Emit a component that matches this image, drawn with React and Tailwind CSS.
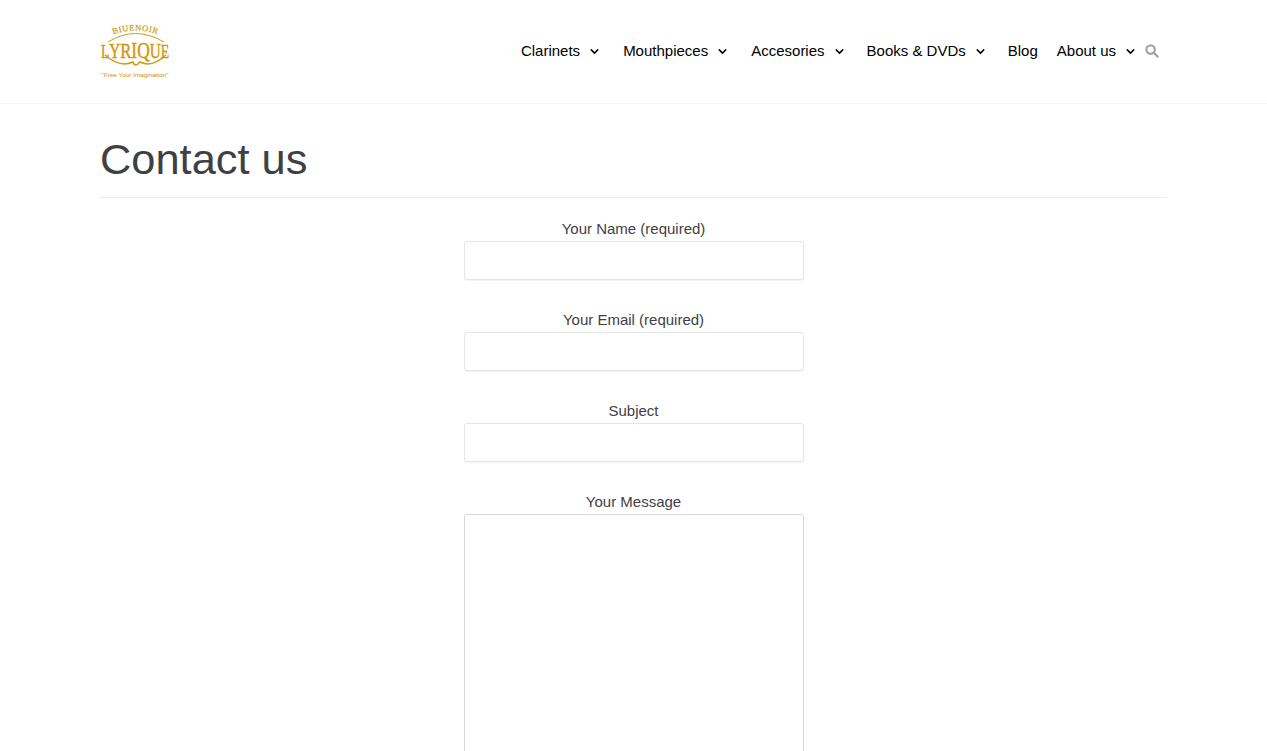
import { ChevronDown } from "lucide-react";

const menu = [
  { label: "Clarinets", gap: "mr-[22px]" },
  { label: "Mouthpieces", gap: "mr-[22px]" },
  { label: "Accesories", gap: "mr-[21px]" },
  { label: "Books & DVDs", gap: "mr-[21px]" },
  { label: "Blog", plain: true },
  { label: "About us" },
];

function Logo() {
  return (
    <svg width="70" height="56" viewBox="0 0 70 56" className="block overflow-visible">
      <path id="logo-arc" d="M9 12 Q35 1 62 12" fill="none" />
      <text fontFamily="Liberation Serif, serif" fontSize="8.5" fill="#d1990f" stroke="#d1990f" strokeWidth="0.2" letterSpacing="0.6">
        <textPath href="#logo-arc" startOffset="50%" textAnchor="middle">BIUENOIR</textPath>
      </text>
      <path d="M8 18 Q35 1 64 18" fill="none" stroke="#d1990f" strokeWidth="1" />
      <g transform="translate(35 33.5) scale(0.76 1)">
        <text textAnchor="middle" fontFamily="Liberation Serif, serif" fill="#d1990f" stroke="#d1990f" strokeWidth="0.5">
          <tspan fontSize="18">L</tspan>
          <tspan fontSize="20">Y</tspan>
          <tspan fontSize="22">R</tspan>
          <tspan fontSize="23">I</tspan>
          <tspan fontSize="23">Q</tspan>
          <tspan fontSize="20">U</tspan>
          <tspan fontSize="18">E</tspan>
        </text>
      </g>
      <path d="M5 31 Q20 44 33 38 Q35 44 40 38 Q52 44 66 31" fill="none" stroke="#d1990f" strokeWidth="1.5" />
      <g transform="translate(35 53) scale(1.07 1)">
        <text textAnchor="middle" fontFamily="Liberation Sans, sans-serif" fontSize="6" fill="#d9a53a" stroke="#d9a53a" strokeWidth="0.1">"Free Your Imagination"</text>
      </g>
    </svg>
  );
}

function Field({ label, textarea }) {
  return (
    <div className="flex flex-col items-center">
      <label className="block h-[24px] text-[15px] leading-[24px] text-[#3f3f46]">{label}</label>
      {textarea ? (
        <div className="h-[300px] w-[340px] rounded-[3px] border border-[#d8d8d8] bg-white" />
      ) : (
        <input className="block h-[39px] w-[340px] rounded-[3px] border border-[#e6e6e6] bg-white shadow-[0_1px_1px_rgba(0,0,0,0.05)]" />
      )}
    </div>
  );
}

export default function App() {
  return (
    <div className="h-screen overflow-hidden bg-white font-['Liberation_Sans',sans-serif]">
      <header className="h-[104px] border-b border-[#f7f7f7]">
        <div className="flex h-[103px] items-center justify-between pl-[100px] pr-[108px]">
          <Logo />
          <nav className="flex items-center text-[15px] text-black">
            {menu.map((item) => (
              <a key={item.label} className={item.plain ? "mr-[19px]" : `flex items-center ${item.gap || ""}`}>
                {item.label}
                {!item.plain && <ChevronDown className="ml-[8px] size-[13px]" strokeWidth={2.75} />}
              </a>
            ))}
            <svg width="14" height="14" viewBox="0 0 14 14" className="ml-[8px] -translate-y-px" fill="none" stroke="#a3a3a3" strokeWidth="2.2">
              <circle cx="5.6" cy="5.6" r="4.2" />
              <path d="M8.8 8.8l3.8 3.8" strokeLinecap="round" />
            </svg>
          </nav>
        </div>
      </header>
      <main className="mx-[100px]">
        <div className="border-b border-[#ececec] pb-[11px] pt-[28px]">
          <h1 className="text-[43.4px] leading-[54px] text-[#3f3f46]">Contact us</h1>
        </div>
        <form className="flex flex-col gap-[28px] pt-[19px]">
          <Field label="Your Name (required)" />
          <Field label="Your Email (required)" />
          <Field label="Subject" />
          <Field label="Your Message" textarea />
        </form>
      </main>
    </div>
  );
}
